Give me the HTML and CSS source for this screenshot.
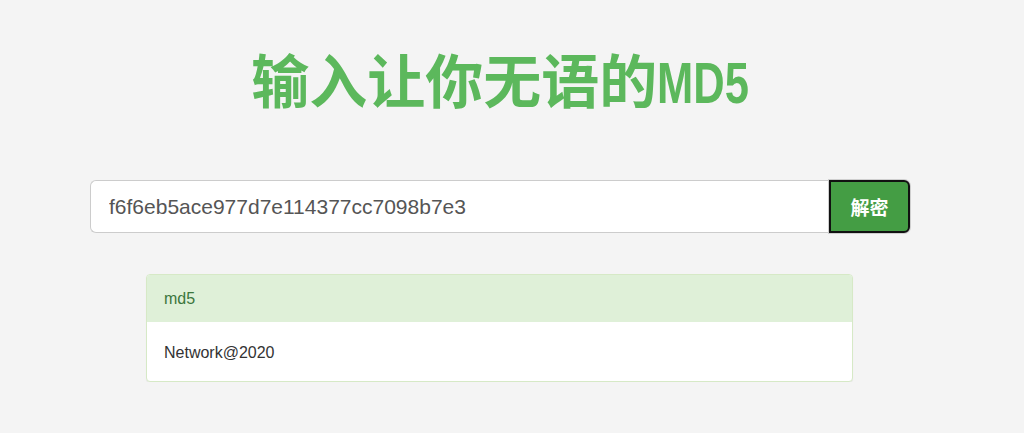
FILE: index.html
```html
<!DOCTYPE html>
<html lang="zh">
<head>
    <meta charset="UTF-8">
    <meta name="viewport" content="width=device-width, initial-scale=1.0">
    <title>输入让你无语的MD5</title>
    <link rel="stylesheet" href="styles.css">
</head>
<body>
    <div class="page">
        <h1 class="title">输入让你无语的<span class="title-latin">MD5</span></h1>

        <!-- 输入框 -->
        <div class="search">
            <input type="text" class="search-input" value="f6f6eb5ace977d7e114377cc7098b7e3">
            <button class="search-btn">解密</button>
        </div>

        <!-- 结果 -->
        <div class="panel">
            <div class="panel-heading">md5</div>
            <div class="panel-body">Network@2020</div>
        </div>
    </div>
</body>
</html>
```

FILE: styles.css
```css
html, body {
    margin: 0;
    padding: 0;
    background-color: #f4f4f4;
}
body {
    font-family: "Liberation Sans", Arial, "Noto Sans CJK SC", sans-serif;
    font-size: 14px;
    color: #333;
}
.page {
    width: 1000px;
    padding-top: 38px;
}
.title {
    margin: 0;
    height: 80px;
    text-align: center;
    font-family: "Noto Sans CJK SC", sans-serif;
    font-size: 58px;
    font-weight: bold;
    line-height: 80px;
    color: #5cb85c;
}
/* 半角字母较窄 */
.title-latin {
    display: inline-block;
    line-height: 1;
    margin-right: -31px;
    font-family: "Liberation Sans", Arial, sans-serif;
    transform: scaleX(0.75);
    transform-origin: left center;
}
.search {
    display: flex;
    margin: 62px 90px 0;
    height: 53px;
}
.search-input {
    flex: 1;
    box-sizing: border-box;
    height: 53px;
    margin: 0;
    padding: 0 18px;
    border: 1px solid #ccc;
    border-right: none;
    border-radius: 6px 0 0 6px;
    background: #fff;
    font-family: "Liberation Sans", Arial, sans-serif;
    font-size: 21px;
    color: #555;
    outline: none;
}
.search-btn {
    width: 81px;
    box-sizing: border-box;
    height: 53px;
    margin: 0;
    padding: 0;
    border: 2px solid #111;
    border-radius: 0 6px 6px 0;
    box-shadow: 0 0 0 1px #cfcfcf;
    background-color: #449d44;
    color: #fff;
    font-family: "Noto Sans CJK SC", sans-serif;
    font-size: 19px;
    font-weight: bold;
    cursor: pointer;
}
.panel {
    margin: 41px 147px 0 146px;
    border: 1px solid #d6e9c6;
    border-radius: 4px;
    background: #fff;
    box-shadow: 0 1px 1px rgba(0, 0, 0, .05);
    overflow: hidden;
}
.panel-heading {
    height: 47px;
    line-height: 47px;
    padding: 0 17px;
    background-color: #dff0d8;
    color: #3c763d;
    font-size: 16px;
}
.panel-body {
    height: 59px;
    line-height: 62px;
    padding: 0 17px;
    font-size: 16px;
}
```
